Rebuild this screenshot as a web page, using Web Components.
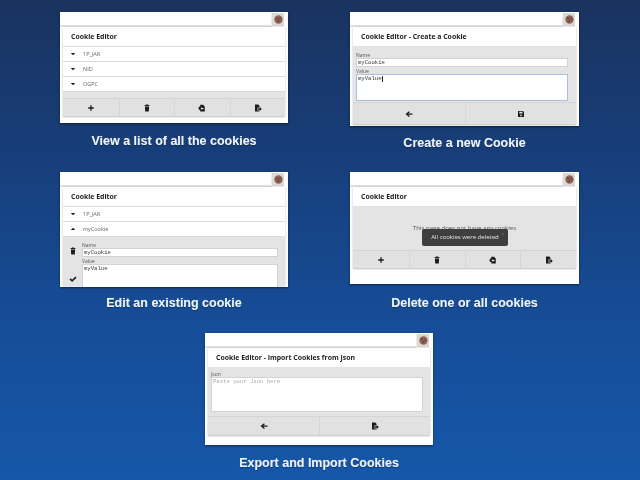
<!DOCTYPE html>
<html>
<head>
<meta charset="utf-8">
<title>Cookie Editor</title>
<style>
  html, body { margin: 0; height: 480px; overflow: hidden; }
  body {
    background: linear-gradient(#1a335f 0%, #173f7c 35%, #164c96 65%, #1657a9 100%);
    font-family: "Open Sans", "Liberation Sans", sans-serif;
  }
  main {
    display: grid;
    grid-template-columns: 228px 229px;
    grid-template-rows: 160px 161px auto;
    column-gap: 62px;
    padding: 12px 0 0 60px;
  }
  .wide { grid-column: 1 / 3; justify-self: start; margin-left: 145px; width: 228px; }
</style>
</head>
<body>
<main>
  <ce-shot caption="View a list of all the cookies" height="111" gap="10">
    <ce-popup heading="Cookie Editor">
      <ce-row name="1P_JAR"></ce-row>
      <ce-row name="NID"></ce-row>
      <ce-row name="OGPC" last></ce-row>
      <ce-toolbar icons="plus trash import export" gap="6"></ce-toolbar>
    </ce-popup>
  </ce-shot>

  <ce-shot caption="Create a new Cookie" height="114" gap="9">
    <ce-popup heading="Cookie Editor - Create a Cookie">
      <ce-form pad="6" rest="1">
        <ce-field label="Name" value="myCookie"></ce-field>
        <ce-field label="Value" value="myValue" multiline rows="27" focused></ce-field>
      </ce-form>
      <ce-toolbar icons="back save" height="23"></ce-toolbar>
    </ce-popup>
  </ce-shot>

  <ce-shot caption="Edit an existing cookie" height="115" gap="8">
    <ce-popup heading="Cookie Editor">
      <ce-row name="1P_JAR"></ce-row>
      <ce-row name="myCookie" open></ce-row>
      <ce-editor>
        <ce-field label="Name" value="myCookie"></ce-field>
        <ce-field label="Value" value="myValue" multiline rows="30"></ce-field>
      </ce-editor>
    </ce-popup>
  </ce-shot>

  <ce-shot caption="Delete one or all cookies" height="112" gap="11">
    <ce-popup heading="Cookie Editor">
      <ce-empty text="This page does not have any cookies">
        <ce-toast>All cookies were deleted</ce-toast>
      </ce-empty>
      <ce-toolbar icons="plus trash import export"></ce-toolbar>
    </ce-popup>
  </ce-shot>

  <ce-shot class="wide" caption="Export and Import Cookies" height="112" gap="10">
    <ce-popup heading="Cookie Editor - Import Cookies from Json">
      <ce-form pad="4" rest="3" right="7">
        <ce-field label="Json" placeholder="Paste your Json here" multiline rows="35"></ce-field>
      </ce-form>
      <ce-toolbar icons="back export" gap="1" height="20"></ce-toolbar>
    </ce-popup>
  </ce-shot>
</main>

<script>
  // one small drawing per icon, all on a 16x16 box
  const ICONS = {
    plus: '<path d="M6.7 2.5h2.6v4.2h4.2v2.6H9.3v4.2H6.7V9.3H2.5V6.7h4.2z"/>',
    trash: '<path d="M6 1h4l.5 1.2h2.2v1.6H3.3V2.2h2.2zM3.8 5h8.4l-.6 10H4.4z"/>',
    import: '<path fill-rule="evenodd" d="M4.5 1.5H10L13.5 5v10h-9v-3H3a4 4 0 0 1 0-7h1.5zM8.5 6L5 9l3.5 3v-1.8h2.5V7.8H8.5z"/>',
    export: '<path d="M2 1h6.5L11 3.5V7H7v6h4v2H2z"/><path d="M8 8.5h3.5V6l4 4-4 4v-2.5H8z"/>',
    back: '<path d="M8 2.5l1.8 1.8L6.6 7H15v2.6H6.6l3.2 2.7L8 14 1 8z"/>',
    save: '<path d="M2 2h10l2 2v10H2zM4.5 3.5v3.7h6.5V3.5z"/><circle cx="8" cy="10.8" r="1.7" fill="#e2e2e2"/>',
    check: '<path d="M1 9l2.3-2.4L6.2 9.4 12.8 3 15 5.3 6.2 14z"/>',
    down: '<path d="M3.5 6h9L8 10.5z"/>',
    up: '<path d="M3.5 10h9L8 5.5z"/>'
  };

  class CeIcon extends HTMLElement {
    connectedCallback() {
      const size = this.getAttribute('size') || 8;
      this.attachShadow({ mode: 'open' }).innerHTML = `
        <style>
          :host { display: inline-flex; color: #1c1c1c; }
          svg { display: block; fill: currentColor; }
        </style>
        <svg width="${size}" height="${size}" viewBox="0 0 16 16">${ICONS[this.getAttribute('name')]}</svg>`;
    }
  }

  class CeShot extends HTMLElement {
    connectedCallback() {
      const gap = this.getAttribute('gap') || 9;
      this.attachShadow({ mode: 'open' }).innerHTML = `
        <style>
          :host { display: block; }
          .card {
            height: ${this.getAttribute('height')}px;
            background: #fff;
            overflow: hidden;
            box-shadow: 0 1px 2px rgba(0, 0, 20, .5);
          }
          .url { display: flex; height: 15px; filter: blur(.4px); }
          .url i { flex: 1; height: 12px; margin-top: 1px; border-bottom: 2px solid #e4e4e4; border-right: 1px solid #eee; }
          .url b { display: flex; align-items: center; justify-content: center; width: 12px; height: 13px; margin: 1px 4px 0 0; background: #dcd8d5; }
          .url svg { display: block; }
          .popup { padding: 0 3px; filter: blur(.45px); }
          p {
            margin: ${gap}px 0 0;
            text-align: center;
            font: bold 12.5px/16px "Liberation Sans", Arial, sans-serif;
            white-space: nowrap;
            color: #eaf4fc;
            text-shadow: 0 0 1px rgba(230, 240, 255, .45), 0 1px 1px rgba(0, 10, 40, .55);
            filter: blur(.25px);
          }
        </style>
        <div class="card">
          <div class="url"><i></i><b><svg width="9" height="9" viewBox="0 0 10 10">
            <circle cx="5" cy="5" r="4.6" fill="#8f6152"/>
            <circle cx="3.4" cy="3.6" r=".9" fill="#5a382e"/><circle cx="6.5" cy="4.4" r=".9" fill="#5a382e"/><circle cx="4.6" cy="6.8" r=".9" fill="#5a382e"/>
          </svg></b></div>
          <div class="popup"><slot></slot></div>
        </div>
        <p>${this.getAttribute('caption')}</p>`;
    }
  }

  class CePopup extends HTMLElement {
    connectedCallback() {
      this.attachShadow({ mode: 'open' }).innerHTML = `
        <style>
          :host {
            display: block;
            background: #e4e4e4;
            box-shadow: 0 0 2px rgba(0, 0, 0, .25);
          }
          h1 {
            margin: 0;
            height: 19px;
            padding-left: 8px;
            background: #fff;
            font: 700 6.9px/20px "Open Sans", "Liberation Sans", sans-serif;
            color: #1b1b1b;
            white-space: nowrap;
            filter: grayscale(1);
          }
        </style>
        <h1>${this.getAttribute('heading')}</h1>
        <slot></slot>`;
    }
  }

  class CeRow extends HTMLElement {
    connectedCallback() {
      const icon = this.hasAttribute('open') ? 'up' : 'down';
      this.attachShadow({ mode: 'open' }).innerHTML = `
        <style>
          :host {
            display: flex;
            align-items: center;
            box-sizing: border-box;
            height: 15px;
            padding-left: 6px;
            background: #fff;
            border-top: 1px solid #dcdcdc;
            font: 5.5px "Open Sans", "Liberation Sans", sans-serif;
            color: #666;
            filter: grayscale(1);
          }
          :host([last]) { height: 16px; border-bottom: 1px solid #dcdcdc; }
          span { margin-left: 6px; }
        </style>
        <ce-icon name="${icon}" size="8"></ce-icon><span>${this.getAttribute('name')}</span>`;
    }
  }

  class CeToolbar extends HTMLElement {
    connectedCallback() {
      const names = this.getAttribute('icons').split(' ');
      const gap = this.getAttribute('gap') || 0;
      const height = this.getAttribute('height') || 19;
      const cells = names.map(n => `<div><ce-icon name="${n}"></ce-icon></div>`).join('');
      this.attachShadow({ mode: 'open' }).innerHTML = `
        <style>
          :host {
            display: grid;
            grid-auto-flow: column;
            grid-auto-columns: 1fr;
            box-sizing: border-box;
            height: ${height}px;
            margin-top: ${gap}px;
            background: #e1e1e1;
            border-top: 1px solid #d4d4d4;
            border-bottom: 1px solid #cfcfcf;
          }
          div { display: flex; align-items: center; justify-content: center; }
          div + div { border-left: 1px solid #d6d6d6; }
        </style>
        ${cells}`;
    }
  }

  class CeField extends HTMLElement {
    connectedCallback() {
      const multi = this.hasAttribute('multiline');
      const value = this.getAttribute('value') || '';
      const hint = this.getAttribute('placeholder') || '';
      const caret = this.hasAttribute('focused') ? '<u></u>' : '';
      this.attachShadow({ mode: 'open' }).innerHTML = `
        <style>
          :host { display: block; }
          label {
            display: block;
            height: 6px;
            font: 5px/6px "Open Sans", "Liberation Sans", sans-serif;
            color: #555;
            filter: grayscale(1);
          }
          div {
            box-sizing: border-box;
            height: ${multi ? this.getAttribute('rows') + 'px' : '9px'};
            padding: 1px 1px;
            background: #fff;
            border: 1px solid ${this.hasAttribute('focused') ? '#a9bfdc' : '#d2d2d2'};
            font: 5.6px/6px "Liberation Mono", monospace;
            color: ${value ? '#333' : '#aaa'};
            overflow: hidden;
          }
          span { display: inline-block; filter: grayscale(1); }
          u { display: inline-block; width: 1px; height: 6px; background: #222; vertical-align: top; }
        </style>
        <label>${this.getAttribute('label')}</label>
        <div><span>${value || hint}</span>${caret}</div>`;
    }
  }

  class CeForm extends HTMLElement {
    connectedCallback() {
      const pad = this.getAttribute('pad') || 5;
      const rest = this.getAttribute('rest') || 3;
      const right = this.getAttribute('right') || 8;
      this.attachShadow({ mode: 'open' }).innerHTML = `
        <style>
          :host { display: grid; gap: 1px; padding: ${pad}px ${right}px ${rest}px 3px; }
        </style>
        <slot></slot>`;
    }
  }

  class CeEditor extends HTMLElement {
    connectedCallback() {
      this.attachShadow({ mode: 'open' }).innerHTML = `
        <style>
          :host {
            display: grid;
            grid-template-columns: 19px 1fr;
            height: 50px;
            padding: 5px 7px 0 0;
            box-sizing: border-box;
            border-top: 1px solid #dcdcdc;
          }
          .side { display: flex; flex-direction: column; align-items: center; padding-top: 5px; gap: 20px; }
          .fields { display: grid; gap: 1px; align-content: start; }
        </style>
        <div class="side"><ce-icon name="trash"></ce-icon><ce-icon name="check"></ce-icon></div>
        <div class="fields"><slot></slot></div>`;
    }
  }

  class CeEmpty extends HTMLElement {
    connectedCallback() {
      this.attachShadow({ mode: 'open' }).innerHTML = `
        <style>
          :host {
            display: block;
            position: relative;
            height: 44px;
            box-sizing: border-box;
            padding-top: 18px;
            text-align: center;
            font: 6.1px/8px "Open Sans", "Liberation Sans", sans-serif;
            color: #555;
            filter: grayscale(1);
          }
        </style>
        ${this.getAttribute('text')}
        <slot></slot>`;
    }
  }

  class CeToast extends HTMLElement {
    connectedCallback() {
      this.attachShadow({ mode: 'open' }).innerHTML = `
        <style>
          :host {
            position: absolute;
            left: 69px;
            top: 23px;
            width: 86px;
            height: 17px;
            border-radius: 2px;
            background: #3e3e3e;
            color: #e8e8e8;
            font: 6px/17px "Open Sans", "Liberation Sans", sans-serif;
            text-align: center;
            white-space: nowrap;
          }
          span { position: absolute; right: 4px; top: -3px; color: #777; font-size: 5px; }
        </style>
        <slot></slot><span>×</span>`;
    }
  }

  customElements.define('ce-icon', CeIcon);
  customElements.define('ce-shot', CeShot);
  customElements.define('ce-popup', CePopup);
  customElements.define('ce-row', CeRow);
  customElements.define('ce-toolbar', CeToolbar);
  customElements.define('ce-field', CeField);
  customElements.define('ce-form', CeForm);
  customElements.define('ce-editor', CeEditor);
  customElements.define('ce-empty', CeEmpty);
  customElements.define('ce-toast', CeToast);
</script>
</body>
</html>
